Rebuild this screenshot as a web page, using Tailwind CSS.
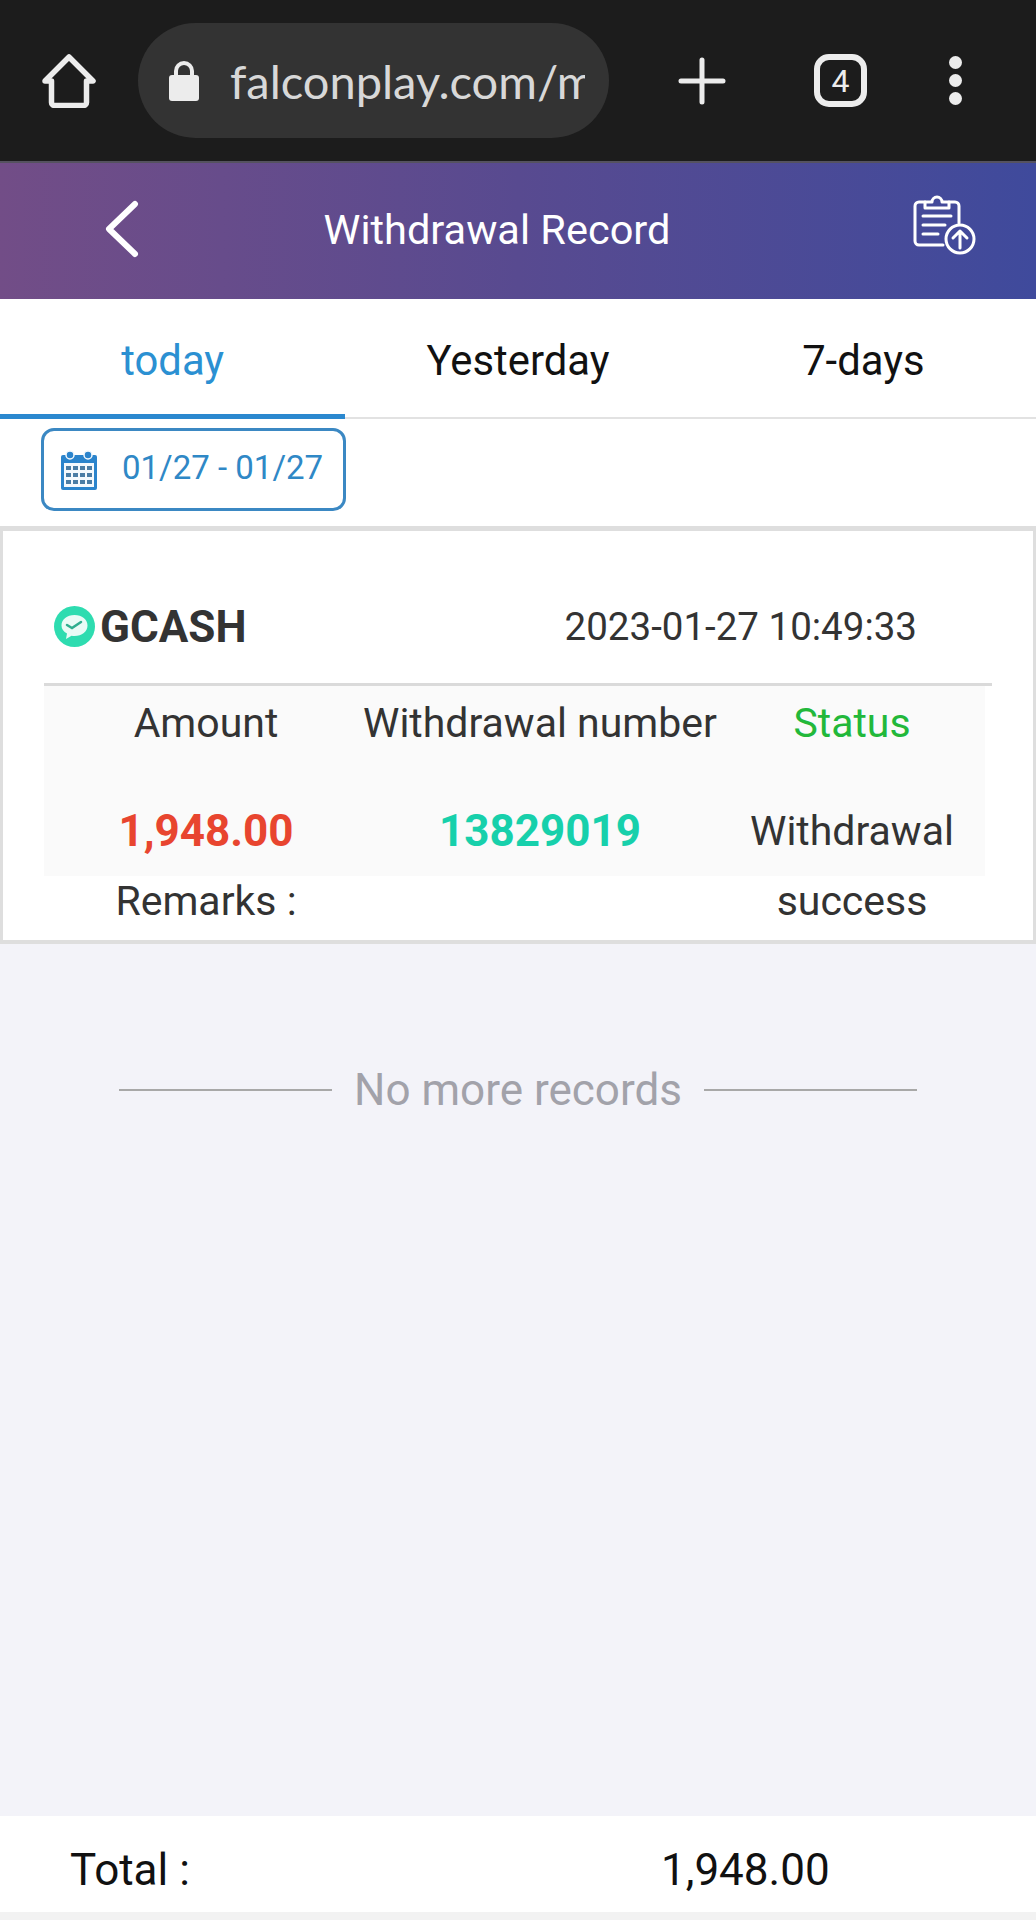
<!DOCTYPE html>
<html lang="en">
<head>
	<meta charset="UTF-8">
	<meta name="viewport" content="width=device-width, initial-scale=1.0">
	<title>Withdrawal Record</title>
	<script src="https://cdn.jsdelivr.net/npm/@tailwindcss/browser@4"></script>
</head>
<body>
	<div class="w-[1036px] h-[1920px] flex flex-col bg-[#f3f3f9] overflow-hidden font-['Roboto',sans-serif] text-[#333]">

		<!-- browser bar -->
		<div class="h-[163px] shrink-0 flex items-center bg-[#1c1c1c] border-b-2 border-[#55525f]">
			<svg class="ml-[42px] w-[54px] h-[54px] shrink-0" viewBox="0 0 54 54" fill="none" stroke="#ececec" stroke-width="5.500" stroke-linejoin="round" stroke-linecap="round">
				<path d="M3 27 27 3l24 24h-6.500v21.500a3 3 0 0 1-3 3h-29a3 3 0 0 1-3-3V27z"/>
			</svg>
			<div class="ml-[42px] w-[471px] h-[115px] shrink-0 rounded-[58px] bg-[#333333] flex items-center">
				<svg class="ml-[29px] w-[34px] h-[42px] shrink-0" viewBox="0 0 34 42" fill="none">
					<path d="M9 18V11a8 8 0 0 1 16 0v7" stroke="#ececec" stroke-width="4"/>
					<rect x="2" y="15" width="30" height="26" rx="3" fill="#ececec"/>
				</svg>
				<div class="ml-[29px] w-[355px] overflow-hidden whitespace-nowrap font-['Lato',sans-serif] text-[47px] leading-[64px] text-[#d8d8d8]">falconplay.com/m</div>
			</div>
			<svg class="ml-[69px] w-[48px] h-[48px] shrink-0" viewBox="0 0 48 48" stroke="#ececec" stroke-width="5" stroke-linecap="round">
				<path d="M24 3v42M3 24h42"/>
			</svg>
			<div class="ml-[88px] w-[53px] h-[53px] shrink-0 rounded-[15px] border-[6px] border-[#ececec] flex items-center justify-center text-[32px] text-[#ececec]">4</div>
			<div class="ml-[82px] flex flex-col gap-[5px] shrink-0">
				<div class="w-[13px] h-[13px] rounded-full bg-[#ececec]"></div>
				<div class="w-[13px] h-[13px] rounded-full bg-[#ececec]"></div>
				<div class="w-[13px] h-[13px] rounded-full bg-[#ececec]"></div>
			</div>
		</div>

		<!-- page header -->
		<div class="h-[136px] shrink-0 relative flex items-center justify-center pr-[42px] pb-[2px] bg-gradient-to-r from-[#724d87] via-[#584a90] to-[#3f4a9c]">
			<svg class="absolute left-[104px] top-[37px] w-[36px] h-[58px]" viewBox="0 0 36 58" fill="none" stroke="#fff" stroke-width="6" stroke-linecap="round" stroke-linejoin="round">
				<path d="M31 4 5 29l26 25"/>
			</svg>
			<div class="text-[41.500px] text-white">Withdrawal Record</div>
			<svg class="absolute left-[912px] top-[31px] w-[64px] h-[62px]" viewBox="0 0 64 62" fill="none" stroke="#fff" stroke-width="3" stroke-linecap="round" stroke-linejoin="round">
				<path d="M13 8H7a4 4 0 0 0-4 4v35a4 4 0 0 0 4 4h24"/>
				<path d="M37 8h6a4 4 0 0 1 4 4v17"/>
				<path d="M13 14V8h7a5 5 0 0 1 10 0h7v6z"/>
				<path d="M11 22h28M11 31h22M11 40h15"/>
				<circle cx="48" cy="45" r="14"/>
				<path d="M48 54V37M41 44l7-7 7 7"/>
			</svg>
		</div>

		<!-- tabs -->
		<div class="h-[120px] shrink-0 grid grid-cols-3 bg-white border-b-2 border-[#e2e2e2] text-[41.800px]">
			<div class="h-[120px] flex items-center justify-center border-b-[5px] border-[#2b88cf] text-[#2b90d2] pt-[10px]">today</div>
			<div class="h-[118px] flex items-center justify-center text-[#111] pt-[6px]">Yesterday</div>
			<div class="h-[118px] flex items-center justify-center text-[#111] pt-[6px]">7-days</div>
		</div>

		<!-- date filter -->
		<div class="h-[112px] shrink-0 bg-white border-b-[5px] border-[#dedede] pt-[9px] pl-[41px]">
			<div class="w-[305px] h-[83px] rounded-[13px] border-[3px] border-[#3b88c3] flex items-center">
				<svg class="ml-[16px] w-[38px] h-[42px] shrink-0" viewBox="0 0 38 42">
					<path d="M3 6h32a2 2 0 0 1 2 2v31a2 2 0 0 1-2 2H3a2 2 0 0 1-2-2V8a2 2 0 0 1 2-2z" fill="#2b84cc"/>
					<rect x="4" y="14" width="30" height="24" fill="#f4f9fd"/>
					<path d="M6 17h5v4H6zM13 17h5v4h-5zM20 17h5v4h-5zM27 17h5v4h-5zM6 24h5v4H6zM13 24h5v4h-5zM20 24h5v4h-5zM27 24h5v4h-5zM6 31h5v4H6zM13 31h5v4h-5zM20 31h5v4h-5zM27 31h5v4h-5z" fill="#4b7da5"/>
					<circle cx="10" cy="6" r="4" fill="#2b84cc" stroke="#f4f9fd" stroke-width="1.500"/>
					<circle cx="28" cy="6" r="4" fill="#2b84cc" stroke="#f4f9fd" stroke-width="1.500"/>
				</svg>
				<div class="ml-[24px] pb-[4px] whitespace-nowrap text-[33px] text-[#2f88c6]">01/27 - 01/27</div>
			</div>
		</div>

		<!-- record card -->
		<div class="h-[413px] shrink-0 bg-white border-x-[3px] border-b-[4px] border-[#dedede]">
			<div class="mx-[41px] h-[155px] flex items-center justify-between border-b-[3px] border-[#dadada] pt-[39px]">
				<div class="flex items-center">
					<svg class="ml-[10px] w-[41px] h-[41px] shrink-0" viewBox="0 0 41 41">
						<circle cx="20.500" cy="20.500" r="20.500" fill="#2edcb0"/>
						<path d="M20.500 9c7.500 0 13 4.500 13 10.500S28 30 20.500 30c-1 0-2 0-3-.300L12 33l1-5.500C9.500 25.500 7.500 23 7.500 19.500 7.500 13.500 13 9 20.500 9z" fill="#e9fbf6"/>
						<path d="M13 19l5 3 9-6" fill="none" stroke="#2fae8f" stroke-width="2.500" stroke-linecap="round"/>
					</svg>
					<div class="ml-[5px] font-bold text-[44px] text-[#333]">GCASH</div>
				</div>
				<div class="mr-[75px] text-[38.500px] text-[#333]">2023-01-27 10:49:33</div>
			</div>
			<div class="mx-[41px] w-[941px] h-[190px] bg-[#fafafa] text-[41px] text-center whitespace-nowrap">
				<div class="grid grid-cols-[324px_344px_280px] h-[78px] leading-[75px]">
					<div>Amount</div>
					<div class="-mx-[8px]">Withdrawal number</div>
					<div class="text-[#22b83a]">Status</div>
				</div>
				<div class="grid grid-cols-[324px_344px_280px] mt-[32px] h-[70px] leading-[70px]">
					<div class="font-bold text-[#e8452f] text-[44px]">1,948.00</div>
					<div class="font-bold text-[#17d0ab] text-[44px]">13829019</div>
					<div>Withdrawal</div>
				</div>
			</div>
			<div class="mx-[41px] h-[51px] grid grid-cols-[324px_344px_280px] leading-[51px] text-center text-[41px]">
				<div>Remarks :</div>
				<div></div>
				<div>success</div>
			</div>
		</div>

		<!-- end of list -->
		<div class="h-[872px] shrink-0 pt-[118px] flex justify-center text-[#a2a2aa]">
			<div class="flex items-center h-[56px]">
				<div class="w-[213px] h-[2px] bg-[#a8a8a8]"></div>
				<div class="mx-[22px] text-[44px]">No more records</div>
				<div class="w-[213px] h-[2px] bg-[#a8a8a8]"></div>
			</div>
		</div>

		<!-- total -->
		<div class="flex-1 bg-white border-b-[8px] border-[#f2f2f2] pt-[12px] flex items-center text-[44px] text-[#111]">
			<div class="ml-[70px] w-[591px]">Total :</div>
			<div>1,948.00</div>
		</div>
	</div>
</body>
</html>
